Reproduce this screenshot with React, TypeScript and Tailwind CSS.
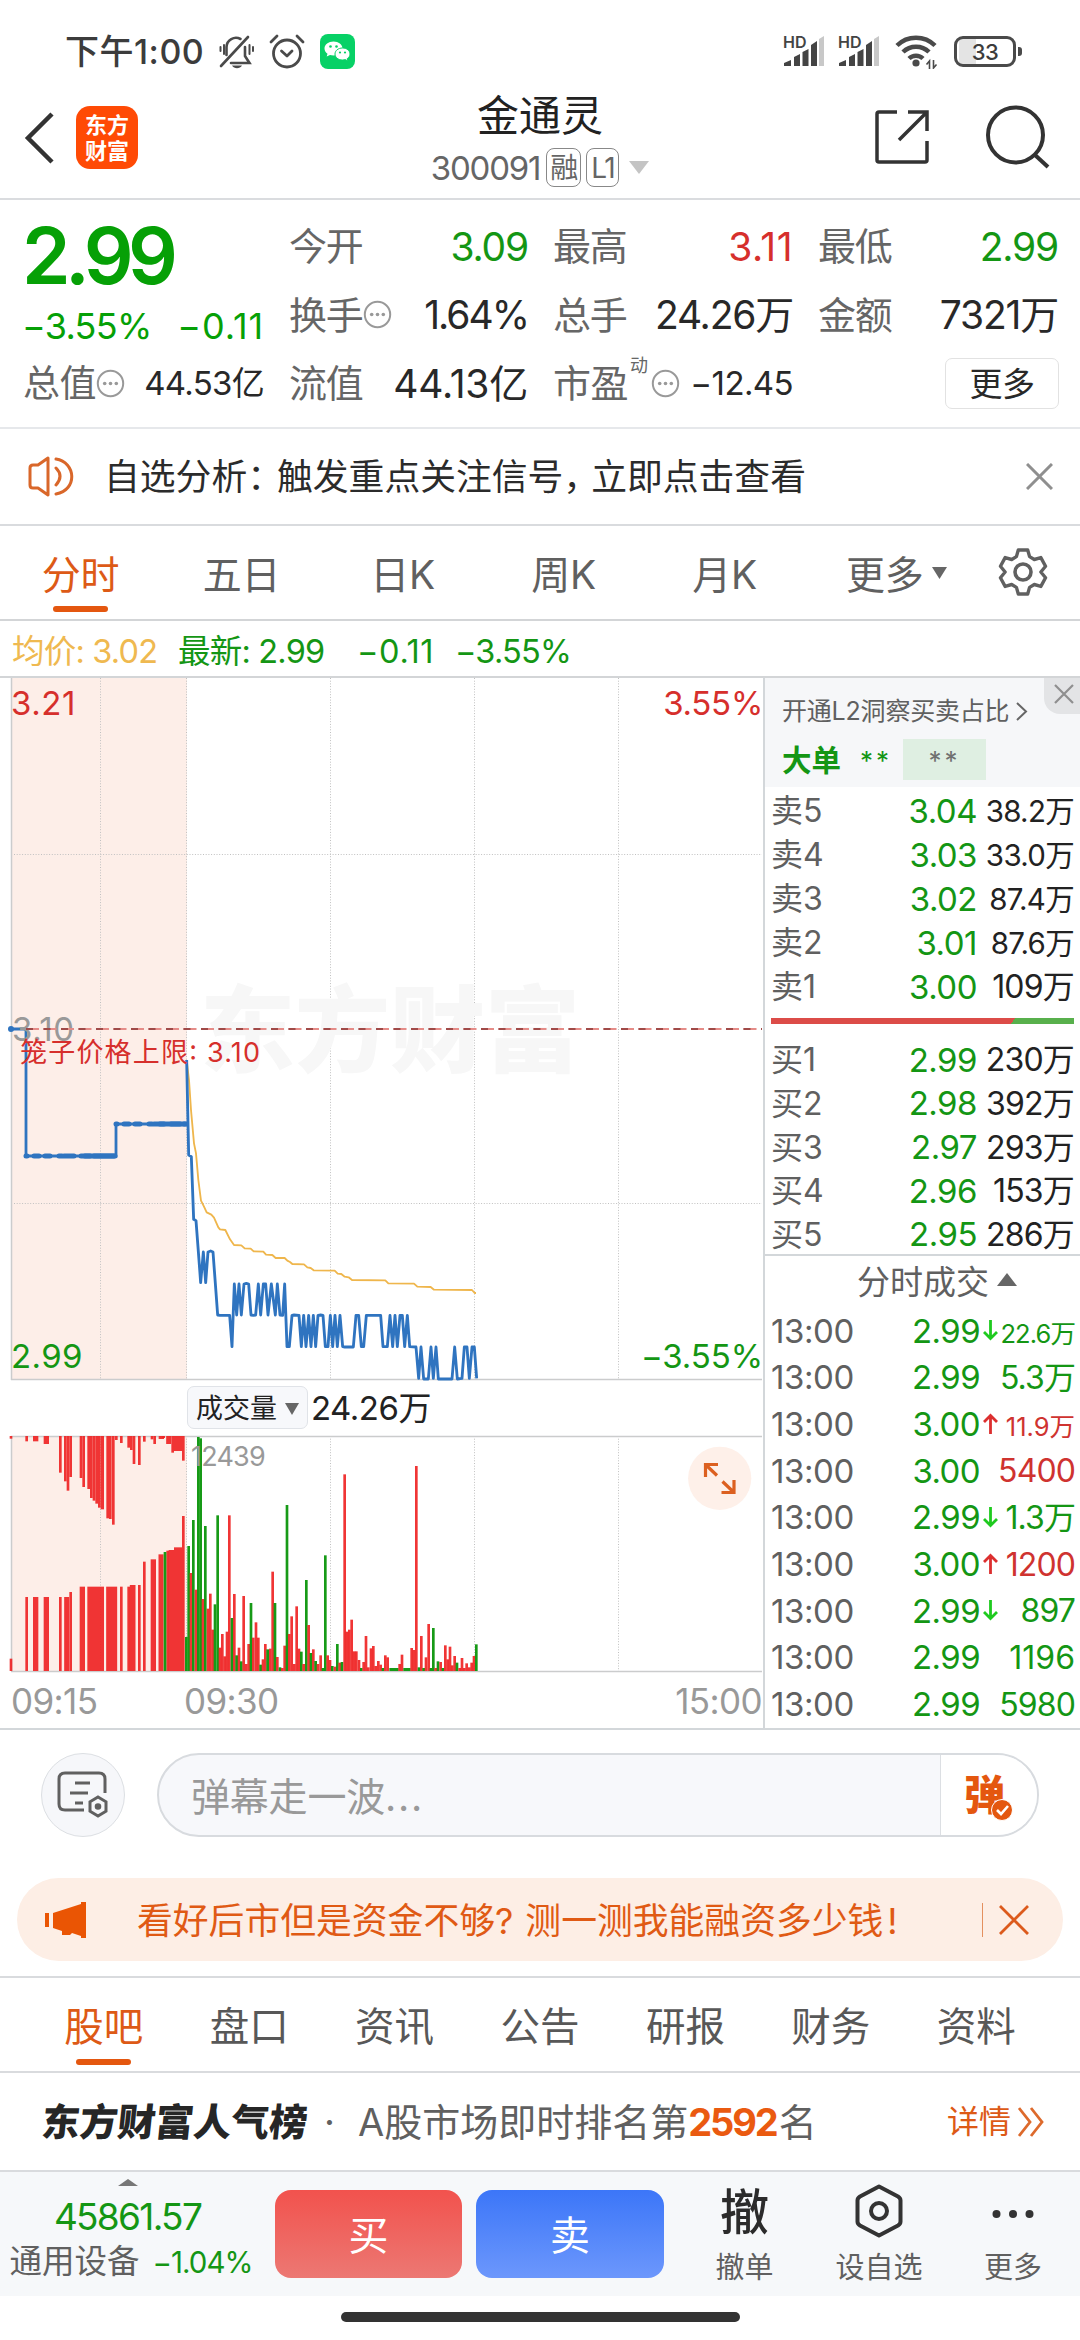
import React from "react";

const RED = "#d62f2c";

type Bar = [x: number, y: number, w?: number, green?: 1];

/* Volume pane, in thirds of a pixel. */
const auctionTop: Bar[] = [
  [33, 176], [80, 184], [107, 184, 16], [139, 192, 16], [181, 278], [196, 304], [204, 332], [212, 291],
  [243, 294], [251, 321], [266, 327], [274, 354], [282, 362], [290, 371], [298, 383], [307, 388, 10],
  [323, 415, 8], [331, 417, 8], [340, 434], [349, 180], [364, 189], [386, 203], [394, 210], [402, 252],
  [418, 255], [433, 185], [456, 178], [464, 192], [484, 177, 16], [491, 174], [506, 192, 15], [518, 218],
  [534, 213, 24], [550, 242],
];
const auctionBottom: Bar[] = [
  [33, 836], [80, 651], [107, 651, 16], [139, 651, 16], [181, 651], [200, 651, 15], [212, 636],
  [247, 620, 16], [287, 620, 50], [335, 620, 33], [364, 620], [386, 620], [398, 615, 17], [418, 615],
  [433, 545], [460, 538, 16], [483, 523, 15], [503, 512], [514, 510, 16], [534, 502, 24], [495, 516, 8, 1],
  [550, 408],
];
const session: Bar[] = [
  [559, 771, 8, 1], [566, 498, 8, 1], [573, 579], [580, 420, 8, 1], [588, 629], [595, 171, 8, 1], [602, 175, 8, 1],
  [609, 657], [616, 438, 8, 1], [624, 686], [631, 641], [638, 749], [645, 673, 8, 1], [653, 406, 8, 1], [660, 803],
  [667, 762], [674, 829], [681, 755], [688, 406], [696, 714, 8, 1], [703, 642], [710, 826, 8, 1], [717, 803],
  [724, 844, 8, 1], [731, 648], [739, 852], [746, 792], [753, 669, 8, 1], [760, 773], [768, 727], [775, 773],
  [782, 854, 8, 1], [789, 838], [796, 792], [803, 808, 8, 1], [811, 806], [818, 575], [825, 669, 8, 1], [832, 831],
  [840, 862, 8, 1], [847, 864], [854, 797], [861, 375, 8, 1], [868, 762], [875, 709], [883, 852], [890, 679],
  [897, 806], [904, 815, 8, 1], [911, 852], [919, 600, 8, 1], [926, 735], [933, 819, 8, 1], [940, 808],
  [947, 843, 8, 1], [954, 852], [962, 826], [969, 864, 8, 1], [976, 526, 8, 1], [983, 826], [990, 840],
  [997, 858, 8, 1], [1005, 860], [1012, 792, 8, 1], [1019, 848], [1026, 846, 8, 1], [1034, 283], [1041, 755],
  [1048, 749], [1055, 719], [1062, 814], [1069, 814], [1077, 840], [1084, 864, 8, 1], [1091, 846], [1098, 768],
  [1105, 862], [1113, 805], [1120, 798], [1127, 858], [1135, 843], [1142, 854], [1149, 864, 8, 1], [1156, 826],
  [1163, 832], [1182, 864, 28, 1], [1199, 852], [1206, 824], [1221, 864, 22, 1], [1235, 804], [1242, 810],
  [1249, 258], [1257, 862, 8, 1], [1264, 768], [1271, 864, 8, 1], [1278, 832], [1286, 732], [1293, 864, 8, 1],
  [1300, 744, 8, 1], [1307, 864], [1314, 844, 8, 1], [1322, 846], [1329, 864, 8, 1], [1336, 796], [1343, 838],
  [1350, 800], [1357, 856], [1364, 828], [1371, 848, 8, 1], [1379, 864], [1386, 834], [1393, 864], [1400, 850],
  [1408, 862], [1415, 848], [1422, 828], [1429, 793, 8, 1],
];

const PRICE =
  "20,30 26,315 34,320 41,508 48,512 55,604 62,698 70,606 77,698 84,606 92,603 99,606 106,700 113,795 120,796 149,796 156,890 163,702 170,795 177,702 184,795 192,702 199,700 206,702 213,795 220,796 227,795 235,702 242,795 250,702 257,702 264,795 274,702 286,795 292,702 300,795 308,796 314,702 321,890 328,890 336,796 342,795 357,796 364,890 371,796 378,890 386,796 393,890 400,796 407,890 414,796 422,795 429,796 436,890 444,890 451,796 458,890 465,796 472,890 480,796 488,890 494,891 520,891 528,796 536,796 544,890 551,890 559,796 602,796 609,890 622,890 630,796 638,890 645,796 652,890 660,796 667,796 674,890 682,796 689,890 708,891 716,985 723,891 731,987 745,987 753,891 760,985 768,891 775,987 816,987 824,891 832,987 846,985 853,891 861,891 868,985 876,891 883,891 890,985";
const AVERAGE =
  "20,30 27,90 33,180 42,280 48,310 55,390 63,452 72,470 80,487 94,494 102,503 115,532 120,538 136,540 150,568 162,585 184,586 194,595 212,596 221,604 250,605 258,614 277,615 287,624 314,624 322,632 330,636 337,642 372,643 382,652 392,654 401,661 464,662 473,671 484,672 494,680 506,682 516,690 616,691 625,700 702,701 712,710 752,711 762,719 876,720 884,729 888,729";

const asks = [
  ["卖5", "3.04", "38.2万"],
  ["卖4", "3.03", "33.0万"],
  ["卖3", "3.02", "87.4万"],
  ["卖2", "3.01", "87.6万"],
  ["卖1", "3.00", "109万"],
];
const bids = [
  ["买1", "2.99", "230万"],
  ["买2", "2.98", "392万"],
  ["买3", "2.97", "293万"],
  ["买4", "2.96", "153万"],
  ["买5", "2.95", "286万"],
];
const trades: { price: string; vol: string; dir?: "up" | "down"; red?: boolean; small?: boolean }[] = [
  { price: "2.99", vol: "22.6万", dir: "down", small: true },
  { price: "2.99", vol: "5.3万" },
  { price: "3.00", vol: "11.9万", dir: "up", red: true, small: true },
  { price: "3.00", vol: "5400", red: true },
  { price: "2.99", vol: "1.3万", dir: "down" },
  { price: "3.00", vol: "1200", dir: "up", red: true },
  { price: "2.99", vol: "897", dir: "down" },
  { price: "2.99", vol: "1196" },
  { price: "2.99", vol: "5980" },
];

function Info() {
  return (
    <svg width="29" height="29" viewBox="0 0 29 29" className="shrink-0">
      <circle cx="14.5" cy="14.5" r="12.7" fill="none" stroke="#999" strokeWidth="2" />
      <g fill="#999">
        <circle cx="8.7" cy="14.5" r="1.8" />
        <circle cx="14.5" cy="14.5" r="1.8" />
        <circle cx="20.3" cy="14.5" r="1.8" />
      </g>
    </svg>
  );
}

function Signal() {
  return (
    <div className="relative h-[31px] w-[42px]">
      <svg width="42" height="31" viewBox="0 0 42 31">
        <path d="M0 31v-3l7-3v6zM10 22l6-3v12h-6zM18.500 17l6-3v17h-6zM27 10l6-4v25h-6z" fill="#444" />
        <path d="M35 4l5-3v30h-5z" fill="#c8c8c8" />
      </svg>
      <span className="absolute -left-[1px] -top-[1px] text-[16px] font-semibold leading-none text-[#444]">HD</span>
    </div>
  );
}

function StatusBar() {
  return (
    <div className="flex h-[72px] items-end pb-[3px] pl-[65px] pr-[58px] text-[#3c3c3c]">
      <span className="mb-[-1px] w-[154px] whitespace-nowrap text-[34px] font-medium leading-[36px] tracking-[0.500px]">下午1:00</span>
      <svg width="35" height="34" viewBox="0 0 35 34" fill="none" stroke="#4a4a4a" strokeWidth="2.600" strokeLinecap="round">
        <path d="M7.500 20V12a9.500 9.500 0 0 1 14-8M26 12v9l4.500 7H12M2 31L29 2" />
        <path d="M1.500 12v4M5 10v9M30.500 10v9M34 12v4" strokeWidth="2" />
        <path d="M13 30.500h10c-2 3.500-8 3.500-10 0z" fill="#4a4a4a" stroke="none" />
      </svg>
      <svg width="36" height="35" viewBox="0 0 36 35" fill="none" stroke="#4a4a4a" strokeWidth="2.800" strokeLinecap="round" strokeLinejoin="round" className="ml-[15px]">
        <circle cx="18" cy="19.500" r="13.500" />
        <path d="M2 8l6-6M34 8l-6-6M12.500 17l5.500 5 5-5" />
      </svg>
      <svg width="35" height="35" viewBox="0 0 35 35" className="ml-[15px]">
        <rect width="35" height="35" rx="8" fill="#07d166" />
        <path d="M13.500 7.500c-5 0-9 3-9 7 0 2.200 1.200 4 3 5.300l-.8 2.700 3.300-1.600c1 .3 2.200.5 3.500.5 5 0 9-3 9-7s-4-6.900-9-6.900z" fill="#fff" />
        <path d="M22.500 14c-4.300 0-7.500 2.700-7.500 6s3.200 6 7.500 6c1 0 2-.1 2.800-.4l2.700 1.400-.7-2.400c1.700-1.100 2.700-2.700 2.700-4.600 0-3.300-3.200-6-7.500-6z" fill="#fff" stroke="#07d166" strokeWidth="1" />
        <g fill="#07d166">
          <circle cx="10.500" cy="12.500" r="1.300" />
          <circle cx="16.500" cy="12.500" r="1.300" />
          <circle cx="20" cy="18.500" r="1.100" />
          <circle cx="25" cy="18.500" r="1.100" />
        </g>
      </svg>
      <div className="ml-auto flex items-end gap-[13px] pb-[3px]">
        <Signal />
        <Signal />
      </div>
      <svg width="43" height="35" viewBox="0 0 43 35" fill="none" stroke="#4a4a4a" strokeWidth="4.500" className="ml-[14px]">
        <path d="M2 11.500a27 27 0 0 1 38 0" />
        <path d="M8 18a18.500 18.500 0 0 1 26 0" />
        <path d="M14 24.500a10 10 0 0 1 14 0" />
        <circle cx="21" cy="29" r="3.600" fill="#4a4a4a" stroke="none" />
        <path d="M34.500 35v-8l-3 3.500M38.500 26v8l3-3.500" strokeWidth="1.600" />
      </svg>
      <div className="mb-[2px] ml-[16px] flex items-center">
        <div className="flex h-[31px] w-[62px] items-center justify-center rounded-[9px] border-[3.500px] border-[#4a4a4a] bg-[linear-gradient(90deg,#fff_2px,#e4e4e4_2px,#e4e4e4_19px,#fff_19px)] text-[22px] font-medium leading-none tracking-[-0.500px]">
          33
        </div>
        <div className="ml-[2px] h-[9px] w-[4px] rounded-r-[3px] bg-[#4a4a4a]" />
      </div>
    </div>
  );
}

function Header() {
  return (
    <div className="flex h-[128px] items-start border-b-[2px] border-[#dadcdf] pl-[24px] pr-[30px]">
      <svg width="31" height="52" viewBox="0 0 31 52" fill="none" stroke="#333" strokeWidth="4.500" className="mt-[40px]">
        <path d="M28 2L4 26l24 24" />
      </svg>
      <div className="ml-[21px] mt-[34px] flex h-[63px] w-[62px] flex-col items-center justify-center rounded-[14px] bg-[#ff4a05] text-[22px] font-bold leading-[26px] text-white">
        <span>东方</span>
        <span>财富</span>
      </div>
      <div className="ml-[238px] flex w-[328px] flex-col items-center">
        <div className="mt-[22px] text-[42px] leading-[44px] text-[#222]">金通灵</div>
        <div className="mt-[10px] flex items-center">
          <span className="text-[33px] leading-[38px] tracking-[-1.200px] text-[#666]">300091</span>
          <span className="ml-[6px] flex h-[39px] w-[35px] items-center justify-center rounded-[8px] border-[1.500px] border-[#888] text-[28px] leading-none tracking-[-1px] text-[#666]">融</span>
          <span className="ml-[5px] flex h-[39px] w-[33px] items-center justify-center rounded-[8px] border-[1.500px] border-[#888] text-[28px] leading-none tracking-[-1.500px] text-[#666]">L1</span>
          <svg width="20" height="13" viewBox="0 0 20 13" className="ml-[10px]">
            <path d="M0 0h20L10 13z" fill="#c4c4c4" />
          </svg>
        </div>
      </div>
      <svg width="54" height="54" viewBox="0 0 54 54" fill="none" stroke="#333" strokeWidth="3.500" className="ml-auto mt-[38px]">
        <path d="M22 2H4q-2 0-2 2v46q0 2 2 2h46q2 0 2-2V31M33 2h19v19M52 2L24 30" />
      </svg>
      <svg width="64" height="64" viewBox="0 0 64 64" fill="none" stroke="#333" strokeWidth="4" className="ml-[57px] mt-[33px]">
        <circle cx="29.500" cy="30" r="27.500" />
        <path d="M49 50l13 12" />
      </svg>
    </div>
  );
}

function Quote({ label, children, info, className = "" }: { label: string; children: React.ReactNode; info?: boolean; className?: string }) {
  return (
    <div className="flex items-center justify-between leading-none">
      <span className="flex items-center text-[38px] text-[#666]">
        {label}
        {info && <Info />}
      </span>
      <span className={"whitespace-nowrap " + className}>{children}</span>
    </div>
  );
}

function Quotes() {
  return (
    <div className="grid h-[229px] grid-cols-[241px_239px_240px_240px] grid-rows-[68.5px_68.5px_68.5px] gap-x-[25px] border-b-[2px] border-[#e6e8eb] pl-[23px] pt-[12px] text-[39px] tracking-[-1.200px] text-[#282828]">
      <div className="row-span-2 flex flex-col text-[#06a006]">
        <span className="-ml-[1px] pt-[5px] text-[78px] font-semibold leading-[78px] tracking-[-5.500px]">2.99</span>
        <span className="mt-[13px] flex justify-between text-[36px] leading-[36px] tracking-[-0.700px]">
          <span className="-ml-[1px]">−3.55%</span>
          <span className="tracking-[0.900px]">−0.11</span>
        </span>
      </div>
      <Quote label="今开" className="text-[#149614]">3.09</Quote>
      <Quote label="最高" className="tracking-[0.500px] text-[#d62f2c]">3.11</Quote>
      <Quote label="最低" className="text-[#149614]">2.99</Quote>
      <Quote label="换手" info className="tracking-[-2px]">1.64%</Quote>
      <Quote label="总手">24.26万</Quote>
      <Quote label="金额">7321万</Quote>
      <div className="flex items-center justify-between leading-none">
        <span className="flex items-center text-[37px] tracking-[-0.500px] text-[#666]">
          总值
          <Info />
        </span>
        <span className="text-[33px] tracking-[-0.700px]">44.53亿</span>
      </div>
      <Quote label="流值" className="tracking-[-0.200px]">44.13亿</Quote>
      <div className="flex items-center leading-none">
        <span className="text-[38px] tracking-[-0.500px] text-[#666]">市盈</span>
        <span className="ml-[2px] mt-[-34px] text-[18px] text-[#666]">动</span>
        <span className="ml-[4px]">
          <Info />
        </span>
        <span className="ml-auto text-[33px] tracking-[-0.600px]">−12.45</span>
      </div>
      <div className="ml-auto mr-[-1px] mt-[9px] flex h-[51px] w-[114px] items-center justify-center rounded-[7px] border-[1.500px] border-[#e2e2e2] pt-[2px] text-[33px] leading-none tracking-[-0.500px]">更多</div>
    </div>
  );
}

function Notice() {
  return (
    <div className="flex h-[97px] items-center border-b-[2px] border-[#d9dbde] pl-[28px] pr-[27px]">
      <svg width="47" height="41" viewBox="0 0 47 41" fill="none" stroke="#d9672a" strokeWidth="3" strokeLinecap="round" strokeLinejoin="round">
        <path d="M20 2L10 9H5q-3 0-3 3v17q0 3 3 3h5l10 7zM28 12q8 8 0 17M28 3c20 3 22 31 0 35" />
      </svg>
      <span className="ml-[29px] whitespace-nowrap pt-[3px] text-[35.800px] leading-none text-[#2b2b2b]">
        自选分析<span className="mr-[-6px]">：</span>触发重点关注信号<span className="mr-[-8px]">，</span>立即点击查看
      </span>
      <svg width="27" height="27" viewBox="0 0 27 27" stroke="#8f8f8f" strokeWidth="3" className="ml-auto">
        <path d="M1 1l25 25M26 1L1 26" />
      </svg>
    </div>
  );
}

function ChartTabs() {
  return (
    <div className="flex h-[95px] items-stretch border-b-[2px] border-[#d3d5d7] text-[39px] leading-none tracking-[-0.300px] text-[#606060]">
      {["分时", "五日", "日K", "周K", "月K"].map((t, i) => (
        <div key={t} className={"flex w-[161px] flex-col items-center pt-[29px] " + (i === 0 ? "text-[#dd5a16]" : "")}>
          {t}
          {i === 0 && <div className="mt-[12px] h-[6px] w-[55px] rounded-full bg-[#e4570f]" />}
        </div>
      ))}
      <div className="ml-[41px] flex items-start pt-[29px]">
        更多
        <svg width="15" height="12" viewBox="0 0 15 12" className="ml-[9px] mt-[12px]">
          <path d="M0 0h15L7.500 12z" fill="#666" />
        </svg>
      </div>
      <svg width="50" height="50" viewBox="0 0 50 50" fill="none" stroke="#606060" strokeWidth="3.600" strokeLinejoin="round" className="ml-[51px] mt-[21px]">
        <path d="M20 2h10l2 7 5 3 7-2 5 9-5 6 5 6-5 9-7-2-5 3-2 7H20l-2-7-5-3-7 2-5-9 5-6-5-6 5-9 7 2 5-3z" transform="translate(1.500 1) scale(.94 .96)" />
        <circle cx="25" cy="25" r="8" />
      </svg>
    </div>
  );
}

function Bars({ data, base, down }: { data: Bar[]; base: number; down?: boolean }) {
  return (
    <>
      {data.map(([x, y, w = 8, g], i) => (
        <rect key={i} x={x - w / 2} y={down ? base : y} width={w} height={down ? y - base : base - y} fill={g ? "#0b950b" : "#ef2424"} fillOpacity={g ? 0.95 : 0.92} />
      ))}
    </>
  );
}

function Chart() {
  const grid = { stroke: "#c0c0c0", strokeWidth: 1, strokeDasharray: "1 1.700" };
  return (
    <div className="relative h-[1050px] w-[763px]">
      <svg width="763" height="1050" viewBox="0 678 763 1050" className="block">
        <rect x="11" y="678" width="176" height="702" fill="#fdeee8" />
        <rect x="11" y="1436" width="176" height="235" fill="#fdeee8" />
        <g {...grid}>
          {[100.5, 186.5, 330.5, 474.5, 618.5].map((x) => (
            <path key={x} d={`M${x} 678V1380M${x} 1436V1671`} />
          ))}
          <path d="M14 854.500H762M14 1203.500H762" />
        </g>
        <text x="200" y="1065" fontSize="94" fontWeight="900" fill="#f7f7f7" textLength="380" lengthAdjust="spacingAndGlyphs">东方财富</text>
        <g stroke="#cbcccd" strokeWidth="1.500">
          <path d="M11.500 678V1380M11 1379.500H762M11 1436.500H762M11.500 1436V1671M11 1671.500H762" />
        </g>
        <g fill="none" stroke="#2f74c0">
          <path d="M11 1029h15V1156H116V1124H187" strokeWidth="2.800" />
          <path d="M26 1156H115M116 1124H186" strokeWidth="5" strokeLinecap="round" strokeDasharray="1 7 5 6 5 9 3 2 10 7 9 4 26 3 8 5" />
          <path d="M85 1156H114M160 1124H185" strokeWidth="5" strokeLinecap="round" />
          <circle cx="11" cy="1029" r="3" fill="#2f74c0" stroke="none" />
        </g>
        <text x="12" y="1041" fontSize="33" letterSpacing="0.500" fill="#999">3.10</text>
        <path d="M26 1029H762" stroke="#e58c88" strokeWidth="1.800" strokeDasharray="13 4.500" />
        <path d="M26 1029H762" stroke="#a04a48" strokeWidth="1.800" strokeDasharray="7 10.500" />
        <g transform="translate(180 1050) scale(.33333)" fill="none" strokeLinejoin="round">
          <polyline points={AVERAGE} stroke="#efb64c" strokeWidth="5.500" />
          <polyline points={PRICE} stroke="#2f74c0" strokeWidth="8.500" />
        </g>
        <text x="20" y="1062" fontSize="27" fill={RED} textLength="240" lengthAdjust="spacing">笼子价格上限: 3.10</text>
        <g fontSize="33">
          <text x="11" y="715" letterSpacing="0.600" fill={RED}>3.21</text>
          <text x="763" y="715" textAnchor="end" letterSpacing="-0.300" fill={RED}>3.55%</text>
          <text x="11" y="1368" letterSpacing="0.400" fill="#149614">2.99</text>
          <text x="763" y="1368" textAnchor="end" letterSpacing="-0.100" fill="#149614">−3.55%</text>
        </g>
        <g transform="translate(0 1380) scale(.33333)">
          <Bars data={auctionTop} base={168} down />
          <Bars data={auctionBottom} base={873} />
          <Bars data={session} base={873} />
        </g>
        <text x="191" y="1466" fontSize="27" letterSpacing="-0.800" fill="#999">12439</text>
        <g fontSize="35" letterSpacing="-0.600" fill="#999">
          <text x="11" y="1714">09:15</text>
          <text x="184" y="1714">09:30</text>
          <text x="762" y="1714" textAnchor="end">15:00</text>
        </g>
        <circle cx="719.700" cy="1478.300" r="31.600" fill="#fef0e9" />
        <path d="M718 1464.500h-12.500v12.500M706 1465l11 10.500M721.500 1492.500h12.500V1480M733.500 1492l-11-10.500" fill="none" stroke="#dc6020" strokeWidth="3.200" />
      </svg>
      <div className="absolute left-[187px] top-[708px] flex items-center">
        <div className="flex h-[43px] w-[121px] items-center justify-center gap-[8px] rounded-[7px] border border-[#e0e3e8] bg-[#f7f8fb] pt-[2px] text-[27px] leading-none text-[#222]">
          成交量
          <svg width="14" height="12" viewBox="0 0 14 12">
            <path d="M0 0h14L7 12z" fill="#666" />
          </svg>
        </div>
        <span className="ml-[3px] pt-[1px] text-[33px] leading-none tracking-[-0.500px] text-[#222]">24.26万</span>
      </div>
    </div>
  );
}

function Depth({ rows }: { rows: string[][] }) {
  return (
    <>
      {rows.map(([n, p, v]) => (
        <div key={n} className="flex h-[44px] items-center pl-[6px] pr-[6px] pt-[2px] leading-none">
          <span className="w-[64px] text-[32px] text-[#606060]">{n}</span>
          <span className="w-[142px] text-right text-[33px] tracking-[-0.500px] text-[#149614]">{p}</span>
          <span className={"flex-1 whitespace-nowrap text-right text-[#222] " + (v.length > 4 ? "text-[29.500px] tracking-[-0.700px]" : "text-[32px] tracking-[-0.800px]")}>{v}</span>
        </div>
      ))}
    </>
  );
}

function Side() {
  return (
    <div className="flex h-[1050px] w-[317px] flex-col border-l-[2px] border-[#d3d7da]">
      <div className="relative h-[110px] bg-[#f6f7f9] pl-[17px] pt-[20px]">
        <div className="flex items-center text-[25px] leading-[26px] tracking-[-0.200px] text-[#606060]">
          开通L2洞察买卖占比
          <svg width="12" height="19" viewBox="0 0 12 19" fill="none" stroke="#666" strokeWidth="2" className="ml-[7px]">
            <path d="M1 1l9 8.500L1 18" />
          </svg>
        </div>
        <div className="mt-[15px] flex h-[41px] items-center leading-none">
          <span className="w-[78px] pt-[2px] text-[29.500px] font-bold text-[#149614]">大单</span>
          <span className="mt-[2px] text-[26px] tracking-[3px] text-[#149614]">**</span>
          <span className="ml-auto mr-[94px] flex h-[41px] w-[83px] items-center justify-center bg-[#dfefe2] pt-[2px] text-[26px] tracking-[3px] text-[#707070]">**</span>
        </div>
        <div className="absolute right-0 top-0 flex h-[36px] w-[36px] items-center justify-center rounded-bl-[16px] bg-[#e3e4e6]">
          <svg width="20" height="20" viewBox="0 0 20 20" stroke="#8f8f8f" strokeWidth="2.200" className="mb-[4px] ml-[4px]">
            <path d="M1 1l18 18M19 1L1 19" />
          </svg>
        </div>
      </div>
      <div className="pt-[1px]">
        <Depth rows={asks} />
      </div>
      <div className="mb-[13px] ml-[6px] mr-[6px] mt-[10px] h-[6px] shrink-0 bg-[linear-gradient(125deg,#dc4c48_79.500%,#58b04c_79.500%)]" />
      <Depth rows={bids} />
      <div className="mt-[-2px] flex h-[54px] shrink-0 items-center justify-center border-t-[2px] border-[#d3d7da] pl-[29px] pt-[2px] text-[33px] leading-none text-[#606060]">
        分时成交
        <svg width="20" height="13" viewBox="0 0 20 13" className="mb-[6px] ml-[8px]">
          <path d="M0 13h20L10 0z" fill="#666" />
        </svg>
      </div>
      {trades.map((t, i) => (
        <div key={i} className="flex h-[46.7px] shrink-0 items-center pl-[6px] pr-[5px] leading-none">
          <span className="w-[98px] text-[33px] tracking-[-0.400px] text-[#606060]">13:00</span>
          <span className="w-[111px] text-right text-[33px] tracking-[-0.600px] text-[#149614]">{t.price}</span>
          <svg width="15" height="22" viewBox="0 0 15 22" fill="none" strokeWidth="2.800" className="mb-[2px] ml-[3px] shrink-0">
            {t.dir === "down" && <path d="M7.500 1v18M1 13l6.500 6.500L14 13" stroke="#1fca1f" />}
            {t.dir === "up" && <path d="M7.500 21V3M1 9l6.500-6.500L14 9" stroke="#dc2f2f" />}
          </svg>
          <span
            className={
              "flex-1 whitespace-nowrap text-right " +
              (t.small ? "pt-[5px] text-[25.500px] " : "text-[32px] ") +
              (t.vol === "11.9万" ? "tracking-[0px] " : t.vol === "1196" ? "tracking-[0px] " : "tracking-[-0.900px] ") +
              (t.red ? "text-[#cf3330]" : "text-[#149614]")
            }
          >
            {t.vol}
          </span>
        </div>
      ))}
    </div>
  );
}

function Barrage() {
  return (
    <div className="flex h-[109px] items-end border-t-[2px] border-[#d3d7da] pl-[41px]">
      <div className="flex h-[84px] w-[84px] items-center justify-center rounded-full border-[1.500px] border-[#dcdfe3] bg-[#f6f7fa]">
        <svg width="52" height="48" viewBox="0 0 52 48" fill="none" stroke="#606060" strokeWidth="3">
          <path d="M27 39H8q-6 0-6-6V8q0-6 6-6h34q6 0 6 6v14M18 12h15M13 22h18M18 32h8" />
          <path d="M41 26l8 4.800v9.400L41 45l-8-4.800v-9.400z" />
          <circle cx="41" cy="35.500" r="1.800" fill="#606060" />
        </svg>
      </div>
      <div className="ml-[32px] flex h-[84px] w-[882px] overflow-hidden rounded-full border-[2px] border-[#d8dbdf] bg-[#f7f8fb]">
        <span className="flex flex-1 items-center pl-[32px] pt-[2px] text-[39px] leading-none tracking-[-0.200px] text-[#999]">弹幕走一波<span className="tracking-[1.700px]">...</span></span>
        <div className="flex w-[97px] items-center border-l-[1.500px] border-[#dcdfe3] bg-white pl-[23px]">
          <div className="relative text-[41px] font-black leading-none text-[#e4570f]">
            弹
            <svg width="22" height="22" viewBox="0 0 22 22" className="absolute -right-[8px] bottom-[-5px]">
              <circle cx="11" cy="11" r="10.500" fill="#e4570f" stroke="#fff" strokeWidth="1" />
              <path d="M6 11l4 4 7-8" fill="none" stroke="#fff" strokeWidth="2.600" />
            </svg>
          </div>
        </div>
      </div>
    </div>
  );
}

function Promo() {
  return (
    <div className="h-[141px] border-b-[2px] border-[#d9dbde] pl-[17px] pt-[41px]">
      <div className="flex h-[83px] w-[1046px] items-center rounded-full bg-[#fdeee5] pl-[28px] text-[#e05a14]">
        <svg width="42" height="36" viewBox="0 0 42 36" fill="#ea5504">
          <path d="M0 11h4v14H0zM8 11L36 2V0h5v36h-5v-2l-9-3-2 2h-8v-4l-9-3z" />
        </svg>
        <span className="ml-[50px] whitespace-nowrap pt-[4px] text-[35.800px] leading-none">
          看好后市但是资金不够<span className="mr-[2px]">?</span> 测一测我能融资多少钱<span className="ml-[4px]">!</span>
        </span>
        <div className="ml-auto h-[34px] w-[1.500px] bg-[#e4905f]" />
        <svg width="30" height="30" viewBox="0 0 30 30" stroke="#dc5a1c" strokeWidth="2.800" className="ml-[16px] mr-[34px]">
          <path d="M1 1l28 28M29 1L1 29" />
        </svg>
      </div>
    </div>
  );
}

function ForumTabs() {
  return (
    <div className="grid h-[95px] grid-cols-7 border-b-[2px] border-[#d9dbde] px-[31px] text-[39.500px] leading-none text-[#585858]">
      {["股吧", "盘口", "资讯", "公告", "研报", "财务", "资料"].map((t, i) => (
        <div key={t} className={"flex flex-col items-center pt-[30px] " + (i === 0 ? "text-[#dd5a16]" : "")}>
          {t}
          {i === 0 && <div className="mt-[11px] h-[6px] w-[55px] rounded-full bg-[#e4570f]" />}
        </div>
      ))}
    </div>
  );
}

function Rank() {
  return (
    <div className="flex h-[99px] items-center border-b-[2px] border-[#d9dbde] pl-[42px] pr-[36px] pt-[1px] text-[38px] leading-none text-[#606060]">
      <span className="w-[282px] -skew-x-6 whitespace-nowrap font-black tracking-[-0.100px] text-[#262626]">东方财富人气榜</span>
      <span className="w-[34px]">·</span>
      <span className="whitespace-nowrap">A股市场即时排名第</span>
      <span className="font-bold tracking-[-2.100px] text-[#ea5a10]">2592</span>
      <span className="ml-[2px]">名</span>
      <span className="ml-auto text-[32px] text-[#dd5a16]">详情</span>
      <svg width="26" height="30" viewBox="0 0 26 30" fill="none" stroke="#dd6a2c" strokeWidth="2.800" className="ml-[7px]">
        <path d="M1 1l11 14L1 29M13 1l11 14-11 14" />
      </svg>
    </div>
  );
}

function Action({ icon, label, className }: { icon: React.ReactNode; label: string; className: string }) {
  return (
    <div className={"flex flex-col items-center " + className}>
      <div className="flex h-[54px] items-center">{icon}</div>
      <span className="mt-[15px] text-[29px] leading-none text-[#606060]">{label}</span>
    </div>
  );
}

function TradeBar() {
  return (
    <div className="flex h-[124px] bg-[#f6f8fa]">
      <div className="flex w-[275px] flex-col items-center pr-[20px] pt-[7px]">
        <svg width="20" height="7" viewBox="0 0 20 7">
          <path d="M0 7h20L10 0z" fill="#777" />
        </svg>
        <span className="mt-[12px] text-[37px] leading-[38px] tracking-[-1.700px] text-[#149614]">45861.57</span>
        <div className="ml-[7px] mt-[10px] flex items-center whitespace-nowrap leading-none">
          <span className="text-[32.500px] text-[#606060]">通用设备</span>
          <span className="ml-[13px] text-[29.500px] tracking-[-1px] text-[#149614]">−1.04%</span>
        </div>
      </div>
      <button className="mt-[18px] h-[88px] w-[187px] rounded-[16px] bg-[linear-gradient(#f2524d,#ec7873)] pt-[3px] text-[40px] leading-none text-white">买</button>
      <button className="ml-[14px] mt-[18px] h-[88px] w-[188px] rounded-[16px] bg-[linear-gradient(#3c76f8,#6c97fc)] pt-[3px] text-[40px] leading-none text-white">卖</button>
      <Action className="ml-[35px] w-[91px] pt-[12px]" icon={<span className="pt-[2px] text-[49px] font-medium leading-none text-[#2b2b2b]">撤</span>} label="撤单" />
      <Action
        className="ml-[41px] w-[96px] pt-[12px]"
        icon={
          <svg width="50" height="54" viewBox="0 0 50 54" fill="none" stroke="#333" strokeWidth="4" strokeLinejoin="round">
            <path d="M25 2.500l19 10q2.500 1.500 2.500 4v21q0 2.500-2.500 4l-19 10-19-10q-2.500-1.500-2.500-4v-21q0-2.500 2.500-4z" />
            <circle cx="25" cy="27" r="8" />
          </svg>
        }
        label="设自选"
      />
      <Action
        className="ml-[38px] w-[96px] pt-[12px]"
        icon={
          <svg width="42" height="10" viewBox="0 0 42 10" fill="#333" className="mt-[5px]">
            <circle cx="4.500" cy="5" r="4" />
            <circle cx="21" cy="5" r="4" />
            <circle cx="37.500" cy="5" r="4" />
          </svg>
        }
        label="更多"
      />
    </div>
  );
}

export default function App() {
  return (
    <div className="h-[2340px] w-[1080px] overflow-hidden bg-white font-['Inter','Noto_Sans_CJK_SC',sans-serif] font-normal">
      <StatusBar />
      <Header />
      <Quotes />
      <Notice />
      <ChartTabs />
      <div className="flex h-[57px] items-center whitespace-pre border-b-[2px] border-[#d3d5d7] pl-[12px] pt-[7px] text-[32.500px] leading-none tracking-[-0.800px] text-[#149614]">
        <span className="w-[166px] text-[#efb950]">均价: 3.02</span>
        <span className="w-[179px]">最新: 2.99</span>
        <span className="w-[98px] tracking-[0.600px]">−0.11</span>
        <span>−3.55%</span>
      </div>
      <div className="flex">
        <Chart />
        <Side />
      </div>
      <Barrage />
      <Promo />
      <ForumTabs />
      <Rank />
      <TradeBar />
      <div className="flex h-[44px] justify-center pt-[16px]">
        <div className="h-[10px] w-[399px] rounded-full bg-[#333]" />
      </div>
    </div>
  );
}
